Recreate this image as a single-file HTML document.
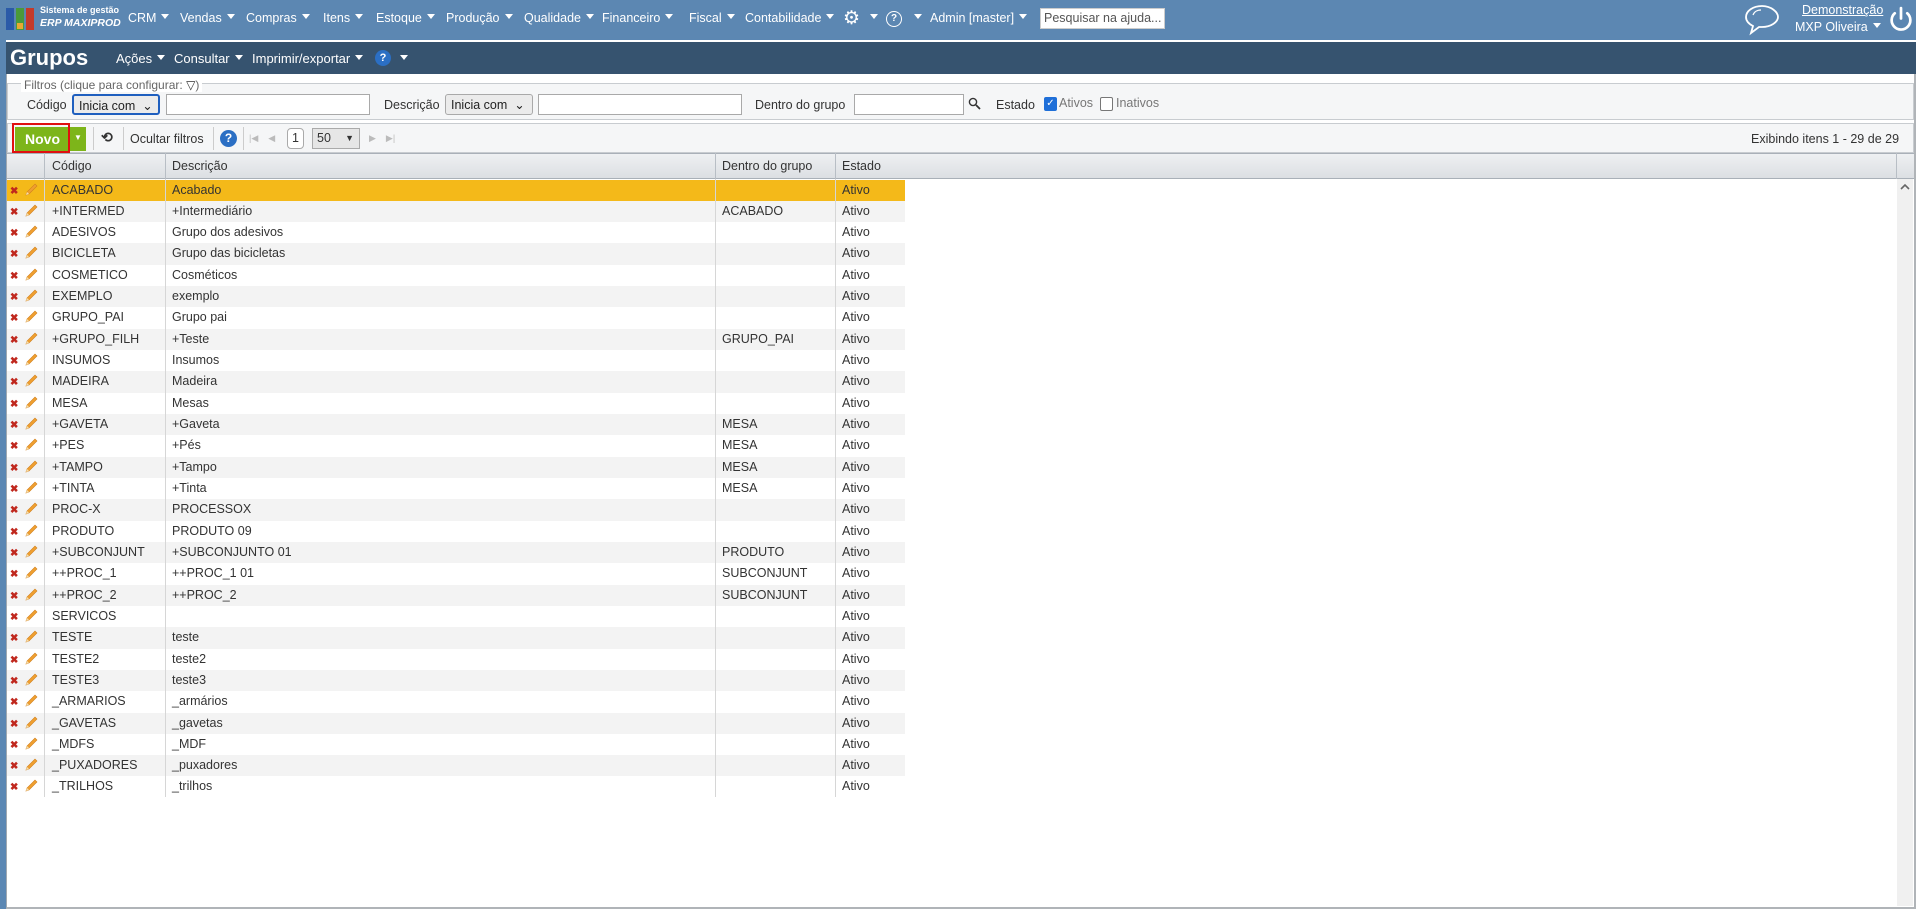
<!DOCTYPE html>
<html><head><meta charset="utf-8"><style>
*{box-sizing:border-box;margin:0;padding:0}
body{width:1916px;height:909px;overflow:hidden;background:#5b87b3;font-family:"Liberation Sans",Tahoma,sans-serif;font-size:12px;color:#333;position:relative}
.a{position:absolute;white-space:nowrap}
.top{left:0;top:0;width:1916px;height:39px;background:#5c87b2}
.m{color:#fff;font-size:12.5px;top:11px}
.tri{display:inline-block;width:0;height:0;border-left:4px solid transparent;border-right:4px solid transparent;border-top:5px solid #fff;vertical-align:middle;margin-left:5px;position:relative;top:-2px}
.main{left:6px;top:40px;width:1910px;height:869px;background:#fff;border-left:1px solid #a0a8b0;border-bottom:2px solid #b0b4b8;border-right:2px solid #b0b4b8}
.title{left:6px;top:40px;width:1910px;height:34px;background:#36536f;border-top:2px solid #fff}
.tl{color:#fff;font-size:13px;top:51px}
.inp{background:#fff;border:1px solid #a9a9a9;height:21px}
.sel{background:#ebebeb;border:1px solid #a9a9a9;border-radius:3px;height:21px;font-size:12.5px;padding:2px 5px;color:#222}
.row{position:absolute;left:7px;width:898px;height:21.32px;font-size:12.5px;line-height:21px}
.row span{position:absolute;top:0}
.x{color:#c0281e;font-weight:bold;font-size:10px}
.vl{position:absolute;width:1px;background:#d6d6d6;z-index:2}
</style></head><body>
<div class="a top"></div>
<div class="a" style="left:6px;top:8px;width:8px;height:22px;background:#2a5aa8"></div>
<div class="a" style="left:16px;top:8px;width:8px;height:22px;background:#4a9a3a"></div>
<div class="a" style="left:17px;top:23px;width:6px;height:6px;background:#e8a830"></div>
<div class="a" style="left:26px;top:8px;width:8px;height:22px;background:#c43a2a"></div>
<div class="a" style="left:40px;top:5px;color:#fff;font-size:9px;font-weight:bold">Sistema de gestão</div>
<div class="a" style="left:40px;top:17px;color:#fff;font-size:10.5px;font-weight:bold;font-style:italic">ERP MAXIPROD</div>
<div class="a m" style="left:128px">CRM<i class="tri"></i></div>
<div class="a m" style="left:180px">Vendas<i class="tri"></i></div>
<div class="a m" style="left:246px">Compras<i class="tri"></i></div>
<div class="a m" style="left:323px">Itens<i class="tri"></i></div>
<div class="a m" style="left:376px">Estoque<i class="tri"></i></div>
<div class="a m" style="left:446px">Produção<i class="tri"></i></div>
<div class="a m" style="left:524px">Qualidade<i class="tri"></i></div>
<div class="a m" style="left:602px">Financeiro<i class="tri"></i></div>
<div class="a m" style="left:689px">Fiscal<i class="tri"></i></div>
<div class="a m" style="left:745px">Contabilidade<i class="tri"></i></div>
<div class="a m" style="left:843px;top:7px;font-size:19px">⚙</div>
<div class="a m" style="left:865px"><i class="tri"></i></div>
<div class="a" style="left:886px;top:11px;width:16px;height:16px;border:1.5px solid #fff;border-radius:50%;color:#fff;font-size:10px;text-align:center;line-height:13px;font-weight:bold">?</div>
<div class="a m" style="left:909px"><i class="tri"></i></div>
<div class="a m" style="left:930px">Admin [master]<i class="tri"></i></div>
<div class="a" style="left:1040px;top:8px;width:125px;height:21px;background:#fff;border:1px solid #ccc;color:#555;font-size:12.5px;padding:2px 3px">Pesquisar na ajuda...</div>
<svg class="a" style="left:1743px;top:3px" width="38" height="33" viewBox="0 0 38 33"><path d="M19 3C10 3 3 8 3 14c0 4 3 7 7 9l-2 7 8-6c1 0 2 0 3 0 9 0 16-5 16-10S28 3 19 3z" fill="none" stroke="#fff" stroke-width="1.8"/><path d="M10 12c1-3 4-5 8-5" fill="none" stroke="#fff" stroke-width="1.2"/></svg>
<div class="a" style="left:1802px;top:3px;color:#fff;font-size:12.5px;text-decoration:underline">Demonstração</div>
<div class="a" style="left:1795px;top:20px;color:#fff;font-size:12.5px">MXP Oliveira<i class="tri"></i></div>
<svg class="a" style="left:1888px;top:6px" width="26" height="27" viewBox="0 0 24 26"><path d="M6 7a9 9 0 1 0 12 0" fill="none" stroke="#fff" stroke-width="2.6" stroke-linecap="round"/><path d="M12 2v10" stroke="#fff" stroke-width="2.6" stroke-linecap="round"/></svg>

<div class="a main"></div>
<div class="a title"></div>
<div class="a" style="left:10px;top:45px;color:#fff;font-size:22px;font-weight:bold">Grupos</div>
<div class="a tl" style="left:116px">Ações<i class="tri"></i></div>
<div class="a tl" style="left:174px">Consultar<i class="tri"></i></div>
<div class="a tl" style="left:252px">Imprimir/exportar<i class="tri"></i></div>
<div class="a" style="left:375px;top:50px;width:16px;height:16px;border-radius:50%;background:#2b6fc4;color:#fff;font-size:11px;font-weight:bold;text-align:center;line-height:16px">?</div>
<div class="a tl" style="left:395px"><i class="tri"></i></div>

<div class="a" style="left:7px;top:83px;width:1907px;height:37px;border:1px solid #c8ccd0;background:#f5f6f7"></div>
<div class="a" style="left:21px;top:78px;background:#fff;padding:0 3px;color:#666;font-size:12px">Filtros (clique para configurar: <span style="color:#333">▽</span>)</div>
<div class="a" style="left:27px;top:98px;font-size:12.5px">Código</div>
<div class="a sel" style="left:72px;top:94px;border:2px solid #1f5fbf;width:88px">Inicia com &nbsp;⌄</div>
<div class="a inp" style="left:166px;top:94px;width:204px"></div>
<div class="a" style="left:384px;top:98px;font-size:12.5px">Descrição</div>
<div class="a sel" style="left:445px;top:94px;width:88px">Inicia com &nbsp;⌄</div>
<div class="a inp" style="left:538px;top:94px;width:204px"></div>
<div class="a" style="left:755px;top:98px;font-size:12.5px">Dentro do grupo</div>
<div class="a inp" style="left:854px;top:94px;width:110px"></div>
<svg class="a" style="left:968px;top:97px" width="13" height="13" viewBox="0 0 13 13"><circle cx="5" cy="5" r="3.6" fill="none" stroke="#333" stroke-width="1.4"/><path d="M8 8l4 4" stroke="#333" stroke-width="1.8"/></svg>
<div class="a" style="left:996px;top:98px;font-size:12.5px">Estado</div>
<div class="a" style="left:1044px;top:97px;width:13px;height:14px;background:#1f6fd8;border-radius:2px;color:#fff;font-size:10px;text-align:center;line-height:14px">✓</div>
<div class="a" style="left:1059px;top:96px;color:#777;font-size:12.5px">Ativos</div>
<div class="a" style="left:1100px;top:97px;width:13px;height:14px;border:1px solid #777;border-radius:2px;background:#fff"></div>
<div class="a" style="left:1116px;top:96px;color:#777;font-size:12.5px">Inativos</div>

<div class="a" style="left:7px;top:123px;width:1907px;height:30px;border:1px solid #c8ccd0;background:#f5f6f7"></div>
<div class="a" style="left:15px;top:127px;width:71px;height:24px;background:#7db51a"></div>
<div class="a" style="left:12px;top:123px;width:58px;height:30px;border:2px solid #e01010"></div>
<div class="a" style="left:25px;top:131px;color:#fff;font-weight:bold;font-size:14px">Novo</div>
<div class="a" style="left:74px;top:133px;color:#fff;font-size:8px">▼</div>
<div class="a" style="left:93px;top:127px;width:1px;height:23px;background:#ccc"></div>
<div class="a" style="left:101px;top:129px;font-size:14px;font-weight:bold">⟲</div>
<div class="a" style="left:123px;top:127px;width:1px;height:23px;background:#ccc"></div>
<div class="a" style="left:130px;top:132px;font-size:12.5px">Ocultar filtros</div>
<div class="a" style="left:213px;top:127px;width:1px;height:23px;background:#ccc"></div>
<div class="a" style="left:220px;top:130px;width:17px;height:17px;border-radius:50%;background:#2b6fc4;color:#fff;font-size:12px;font-weight:bold;text-align:center;line-height:17px">?</div>
<div class="a" style="left:243px;top:127px;width:1px;height:23px;background:#ccc"></div>
<div class="a" style="left:249px;top:133px;color:#bbb;font-size:9px">|◀ &nbsp;&nbsp;&nbsp;◀</div>
<div class="a" style="left:287px;top:128px;width:17px;height:21px;border:1px solid #aaa;border-radius:4px;background:#fff;text-align:center;line-height:19px;font-size:12.5px">1</div>
<div class="a" style="left:312px;top:128px;width:48px;height:21px;border:1px solid #aaa;background:#e6e6e6;padding-left:4px;line-height:19px;font-size:12.5px">50 <span style="position:absolute;right:5px;font-size:9px">▼</span></div>
<div class="a" style="left:369px;top:133px;color:#bbb;font-size:9px">▶ &nbsp;&nbsp;&nbsp;▶|</div>
<div class="a" style="left:1751px;top:132px;font-size:12.5px">Exibindo itens 1 - 29 de 29</div>

<div class="a" style="left:7px;top:153px;width:1907px;height:26px;background:linear-gradient(#eef0f2,#dcdfe3);border-top:1px solid #a9b0b8;border-bottom:1px solid #a9b0b8"></div>
<div class="a" style="left:44px;top:153px;width:1px;height:26px;background:#b8bec5"></div>
<div class="a" style="left:165px;top:153px;width:1px;height:26px;background:#b8bec5"></div>
<div class="a" style="left:715px;top:153px;width:1px;height:26px;background:#b8bec5"></div>
<div class="a" style="left:835px;top:153px;width:1px;height:26px;background:#b8bec5"></div>
<div class="a" style="left:1896px;top:153px;width:1px;height:26px;background:#b8bec5"></div>
<div class="a" style="left:52px;top:159px;font-size:12.5px">Código</div>
<div class="a" style="left:172px;top:159px;font-size:12.5px">Descrição</div>
<div class="a" style="left:722px;top:159px;font-size:12.5px">Dentro do grupo</div>
<div class="a" style="left:842px;top:159px;font-size:12.5px">Estado</div>
<div class="a" style="left:1897px;top:179px;width:16px;height:727px;background:#f0f0f0"></div>
<svg class="a" style="left:1900px;top:183px" width="10" height="8" viewBox="0 0 10 8"><path d="M1 6l4-4 4 4" fill="none" stroke="#666" stroke-width="1.6"/></svg>

<div class="vl" style="left:44px;top:179px;height:618px"></div>
<div class="vl" style="left:165px;top:179px;height:618px"></div>
<div class="vl" style="left:715px;top:179px;height:618px"></div>
<div class="vl" style="left:835px;top:179px;height:618px"></div>

<script>
var d=[["ACABADO","Acabado",""],["+INTERMED","+Intermediário","ACABADO"],["ADESIVOS","Grupo dos adesivos",""],["BICICLETA","Grupo das bicicletas",""],["COSMETICO","Cosméticos",""],["EXEMPLO","exemplo",""],["GRUPO_PAI","Grupo pai",""],["+GRUPO_FILH","+Teste","GRUPO_PAI"],["INSUMOS","Insumos",""],["MADEIRA","Madeira",""],["MESA","Mesas",""],["+GAVETA","+Gaveta","MESA"],["+PES","+Pés","MESA"],["+TAMPO","+Tampo","MESA"],["+TINTA","+Tinta","MESA"],["PROC-X","PROCESSOX",""],["PRODUTO","PRODUTO 09",""],["+SUBCONJUNT","+SUBCONJUNTO 01","PRODUTO"],["++PROC_1","++PROC_1 01","SUBCONJUNT"],["++PROC_2","++PROC_2","SUBCONJUNT"],["SERVICOS","",""],["TESTE","teste",""],["TESTE2","teste2",""],["TESTE3","teste3",""],["_ARMARIOS","_armários",""],["_GAVETAS","_gavetas",""],["_MDFS","_MDF",""],["_PUXADORES","_puxadores",""],["_TRILHOS","_trilhos",""]];
var h="";var pen='<svg style="position:absolute;left:17px;top:3px" width="14" height="14" viewBox="0 0 14 14"><path d="M2 12l1-3 8-8 2 2-8 8z" fill="#f0a030" stroke="#d08020" stroke-width=".6"/><path d="M2 12l1-3 2 2z" fill="#f5e0b0"/></svg>';
d.forEach(function(r,i){var bg=i==0?"background:#f4b919;":(i%2?"background:#f3f3f3;":"");
h+='<div class="row" style="top:'+(179.5+i*21.32)+'px;'+bg+'"><span class="x" style="left:3px;top:1px">✖</span>'+pen+'<span style="left:45px">'+r[0]+'</span><span style="left:165px">'+r[1]+'</span><span style="left:715px">'+r[2]+'</span><span style="left:835px">Ativo</span></div>';});
document.body.insertAdjacentHTML("beforeend",h);
</script>
</body></html>
